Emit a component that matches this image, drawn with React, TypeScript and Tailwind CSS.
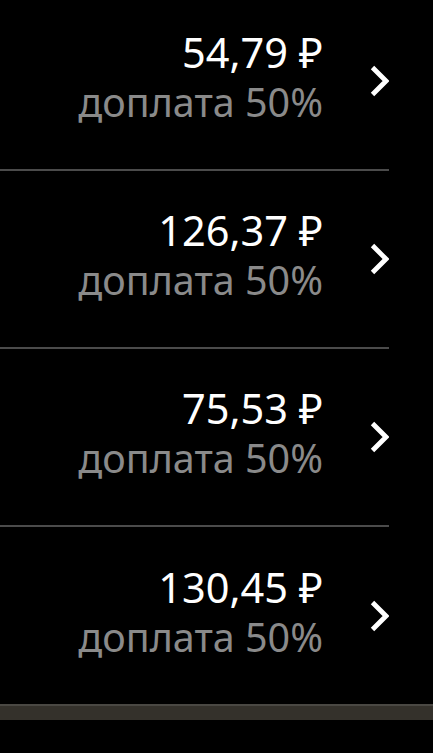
const rows = [
  { price: "54,79 ₽", note: "доплата 50%" },
  { price: "126,37 ₽", note: "доплата 50%" },
  { price: "75,53 ₽", note: "доплата 50%" },
  { price: "130,45 ₽", note: "доплата 50%" },
]

function Chevron() {
  return (
    <svg width="19" height="32" viewBox="0 0 19 32" className="shrink-0 ml-[47px]">
      <polyline points="2.5,2.5 16,16 2.5,29.5" fill="none" stroke="#fff" strokeWidth="4.8" />
    </svg>
  )
}

export default function App() {
  return (
    <div className="w-[433px] h-[753px] bg-black overflow-hidden font-['Noto_Sans',sans-serif]">
      <div className="-mt-[7px]">
        {rows.map((row, i) => (
          <div key={i}>
            <div className={`w-[389px] flex items-center ${i === rows.length - 1 ? "h-[177px]" : "h-[176px]"}`}>
              <div className="flex-1 flex flex-col items-end mb-[8px]">
                <span className="text-[41.5px] leading-[50px] text-white">{row.price}</span>
                <span className="text-[39.5px] leading-[50px] text-[#8a8a8a]">{row.note}</span>
              </div>
              <Chevron />
            </div>
            {i < rows.length - 1 ? (
              <div className="w-[389px] h-[2px] bg-[#4b4b4b]" />
            ) : (
              <div className="h-[16px] bg-[#34312b] border-t-[2px] border-[#4a4843]" />
            )}
          </div>
        ))}
      </div>
    </div>
  )
}
